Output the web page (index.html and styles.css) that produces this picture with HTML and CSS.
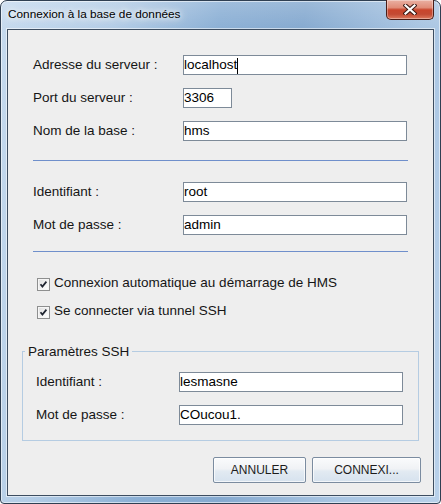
FILE: index.html
```html
<!DOCTYPE html>
<html lang="fr">
<head>
<meta charset="utf-8">
<title>Connexion à la base de données</title>
<link rel="stylesheet" href="styles.css">
</head>
<body>
<div class="window">
  <div class="titlebar">
    <span class="title">Connexion à la base de données</span>
    <div class="close">
      <svg width="14" height="11" viewBox="0 0 14 11">
        <path d="M2.5 1.5 L11.5 9.5 M11.5 1.5 L2.5 9.5" stroke="#3a1712" stroke-width="4.2" stroke-linecap="square" fill="none"/>
        <path d="M2.5 1.5 L11.5 9.5 M11.5 1.5 L2.5 9.5" stroke="#ffffff" stroke-width="2.2" stroke-linecap="square" fill="none"/>
      </svg>
    </div>
  </div>
  <div class="content">
    <div class="grid grid-server">
      <label class="lbl">Adresse du serveur :</label>
      <div class="field">localhost<span class="caret"></span></div>
      <label class="lbl">Port du serveur :</label>
      <div class="field field-port">3306</div>
      <label class="lbl">Nom de la base :</label>
      <div class="field">hms</div>
    </div>
    <div class="sep sep-1"></div>
    <div class="grid grid-user">
      <label class="lbl">Identifiant :</label>
      <div class="field">root</div>
      <label class="lbl">Mot de passe :</label>
      <div class="field">admin</div>
    </div>
    <div class="sep sep-2"></div>
    <div class="checks">
      <div class="check-row">
        <span class="box"><svg width="13" height="13" viewBox="0 0 13 13"><path d="M3.5 6.2 L5.4 8.6 L9.4 3.6" stroke="#1f2430" stroke-width="1.7" fill="none"/></svg></span>
        <span class="check-text">Connexion automatique au démarrage de HMS</span>
      </div>
      <div class="check-row">
        <span class="box"><svg width="13" height="13" viewBox="0 0 13 13"><path d="M3.5 6.2 L5.4 8.6 L9.4 3.6" stroke="#1f2430" stroke-width="1.7" fill="none"/></svg></span>
        <span class="check-text">Se connecter via tunnel SSH</span>
      </div>
    </div>
    <fieldset class="ssh">
      <legend>Paramètres SSH</legend>
      <div class="grid grid-ssh">
        <label class="lbl">Identifiant :</label>
        <div class="field">lesmasne</div>
        <label class="lbl">Mot de passe :</label>
        <div class="field">COucou1.</div>
      </div>
    </fieldset>
    <div class="buttons">
      <button class="btn btn-cancel">ANNULER</button>
      <button class="btn btn-ok">CONNEXI...</button>
    </div>
  </div>
</div>
</body>
</html>
```
FILE: styles.css
```css
html, body {
  margin: 0;
  padding: 0;
  background: #ffffff;
}

.window {
  position: relative;
  box-sizing: border-box;
  width: 441px;
  height: 504px;
  border: 1px solid #2f3f52;
  border-radius: 7px 7px 4px 4px;
  background:
    linear-gradient(180deg, rgba(255,255,255,0.18) 0px, rgba(255,255,255,0) 28px),
    linear-gradient(100deg, #c6daee 0%, #b4cde6 22%, #8cb0d5 42%, #86aad0 58%, #a9c5e2 80%, #b9d1ea 100%);
  box-shadow: inset 0 0 0 1px rgba(255,255,255,0.55);
  display: flex;
  flex-direction: column;
  font-family: "Liberation Sans", Arial, sans-serif;
}

.titlebar {
  height: 28px;
  display: flex;
  align-items: flex-start;
  padding-left: 7px;
}

.title {
  margin-top: 5px;
  font-size: 11.8px;
  line-height: 16px;
  color: #000000;
  text-shadow: 0 0 8px #ffffff, 0 0 5px rgba(255,255,255,0.9), 0 0 12px rgba(255,255,255,0.7);
}

.close {
  position: absolute;
  top: -1px;
  left: 385px;
  box-sizing: border-box;
  width: 48px;
  height: 20px;
  border: 1px solid #4a1d17;
  border-top: none;
  border-radius: 0 0 5px 5px;
  background: linear-gradient(180deg, #eab0a2 0%, #e08c78 40%, #c9452c 52%, #c34a33 75%, #dd7a5f 100%);
  box-shadow: inset 0 0 0 1px rgba(255,255,255,0.35);
  display: flex;
  align-items: center;
  justify-content: center;
}

.close svg {
  display: block;
  margin-top: -1px;
}

.content {
  margin: 0 6px 7px 6px;
  height: 467px;
  box-sizing: border-box;
  border: 1px solid #3d4d60;
  box-shadow: 0 0 0 1px rgba(255,255,255,0.55);
  background: #eeeeee;
  display: flex;
  flex-direction: column;
  color: #111111;
  font-size: 13.5px;
}

.grid {
  display: grid;
  row-gap: 13px;
  align-items: start;
}

.grid-server,
.grid-user {
  grid-template-columns: 150px 224px;
  padding-left: 25px;
}

.grid-server {
  margin-top: 25px;
}

.grid-user {
  margin-top: 21px;
}

.lbl {
  height: 20px;
  box-sizing: border-box;
  padding-top: 2px;
  line-height: 16px;
  white-space: nowrap;
  color: #151515;
}

.field {
  height: 20px;
  box-sizing: border-box;
  border: 1px solid #7d8a98;
  background: #ffffff;
  padding: 1px 0 0 0;
  line-height: 16px;
  color: #000000;
  white-space: nowrap;
  display: flex;
  align-items: flex-start;
}

.field-port {
  width: 49px;
}

.caret {
  display: inline-block;
  width: 1px;
  height: 16px;
  background: #000000;
  margin-left: 0;
  margin-top: 1px;
}

.sep {
  height: 1px;
  width: 375px;
  margin-left: 25px;
  background: #6f8fcb;
}

.sep-1 {
  margin-top: 19px;
}

.sep-2 {
  margin-top: 16px;
}

.checks {
  margin-top: 23px;
  padding-left: 29px;
  display: flex;
  flex-direction: column;
  gap: 12px;
}

.check-row {
  display: flex;
  align-items: flex-start;
  height: 16px;
}

.box {
  width: 13px;
  height: 13px;
  box-sizing: border-box;
  margin-top: 3px;
  border: 1px solid #8e8f8f;
  background: linear-gradient(135deg, #dcdcdc 0%, #f4f4f4 60%, #ffffff 100%);
  box-shadow: inset 0 0 0 1px #f6f6f6;
  position: relative;
  flex: none;
}

.box svg {
  position: absolute;
  left: -1px;
  top: -1px;
}

.check-text {
  margin-left: 4px;
  line-height: 16px;
  white-space: nowrap;
  color: #151515;
}

.ssh {
  margin: 24px 14px 0 14px;
  padding: 0;
  min-width: 0;
  border: 1px solid #b5cce2;
}

.ssh legend {
  margin-left: 2px;
  padding: 0 3px;
  line-height: 17px;
  font-size: 13.5px;
  color: #151515;
}

.grid-ssh {
  grid-template-columns: 143px 224px;
  padding: 12px 0 15px 13px;
}

.buttons {
  margin-top: 16px;
  padding-right: 12px;
  display: flex;
  justify-content: flex-end;
  gap: 6px;
}

.btn {
  height: 26px;
  box-sizing: border-box;
  border: 1px solid #7b8ca0;
  border-radius: 2px;
  background: linear-gradient(180deg, #fafbfc 0%, #f0f2f5 45%, #e2eaf2 55%, #d6e2ee 100%);
  box-shadow: inset 0 0 0 1px rgba(255,255,255,0.7);
  font-family: "Liberation Sans", Arial, sans-serif;
  font-size: 12px;
  color: #1c1c1c;
  padding: 0;
  line-height: 16px;
}

.btn-cancel {
  width: 93px;
}

.btn-ok {
  width: 109px;
}
```
